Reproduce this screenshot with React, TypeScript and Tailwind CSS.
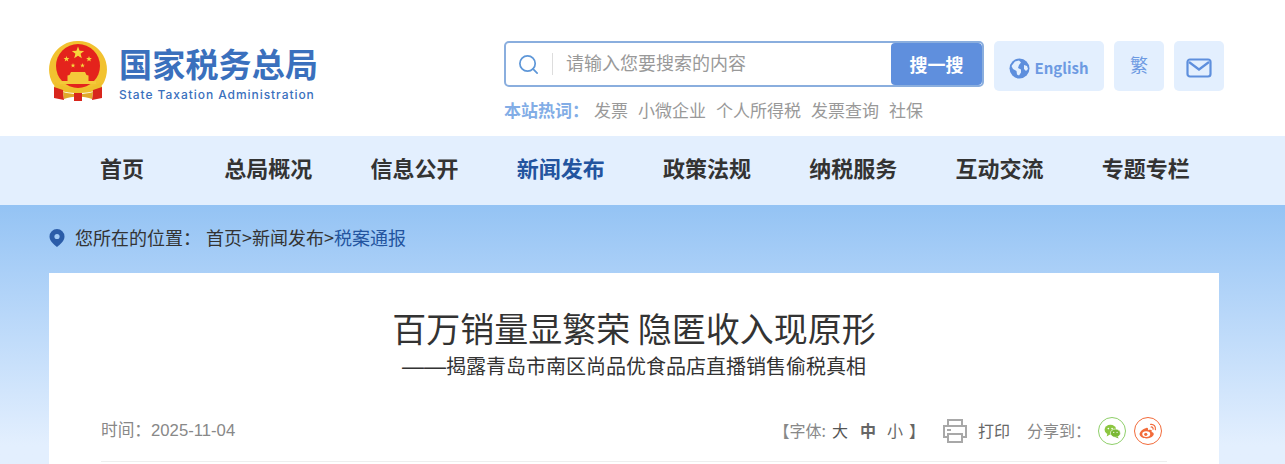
import React from "react";
import { Search } from "lucide-react";

const navItems = ["首页", "总局概况", "信息公开", "新闻发布", "政策法规", "纳税服务", "互动交流", "专题专栏"];
const hotWords = ["发票", "小微企业", "个人所得税", "发票查询", "社保"];

const stars = [
  { x: 29, y: 12, r: 6.5 },
  { x: 17.5, y: 18, r: 3 },
  { x: 40, y: 18, r: 3 },
  { x: 24, y: 24.5, r: 2.5 },
  { x: 33.5, y: 24.5, r: 2.5 },
];

const starPoints = (x: number, y: number, r: number) =>
  Array.from({ length: 10 }, (_, i) => {
    const a = (i * Math.PI) / 5 - Math.PI / 2;
    const d = i % 2 ? r * 0.42 : r;
    return `${x + d * Math.cos(a)},${y + d * Math.sin(a)}`;
  }).join(" ");

const Emblem = () => (
  <svg width="58" height="61" viewBox="0 0 58 61" className="shrink-0">
    <path d="M29 0a28.500 28.500 0 0 1 25 43l-6 6H10l-6-6A28.500 28.500 0 0 1 29 0z" fill="#f2c230" />
    <circle cx="29" cy="25" r="22" fill="#e4231c" />
    {stars.map((s) => (
      <polygon key={s.x} points={starPoints(s.x, s.y, s.r)} fill="#f7d63c" />
    ))}
    <path d="M22 31h14l1.500 3 2 .5V40H18.500v-5.500l2-.5z" fill="#f4c93a" />
    <path d="M11 40h36v3H11z" fill="#f4c93a" />
    <path d="M6 41c6 5 15 6 23 6s17-1 23-6l1 6c-7 4-16 5-24 5s-17-1-24-5z" fill="#eec02c" />
    <path d="M5 46l9 3 1 10-10-2z" fill="#d8261c" />
    <path d="M53 46l-9 3-1 10 10-2z" fill="#d8261c" />
    <path d="M14 51c5 1.500 10 2 15 2s10-.5 15-2l-1 7c-4-1.500-9-2.500-14-2.500S19 56.500 15 58z" fill="#e0a92a" />
    <path d="M25 52h8v8h-8z" fill="#d8261c" />
  </svg>
);

const GlobeIcon = () => (
  <svg width="21" height="21" viewBox="0 0 21 21">
    <circle cx="10.500" cy="10.500" r="10" fill="#5e8fdd" />
    <path d="M6 3.500l4-1 2 2-2 2.500-1 3 3 1.500v3l-2 3-2-1-.5-3.500-3.500-2-1.500-3z" fill="#e3effe" />
    <path d="M15 7l3 1 1 3-2 2-2-2z" fill="#e3effe" />
  </svg>
);

const MailIcon = () => (
  <svg width="26" height="20" viewBox="0 0 26 20" fill="none" stroke="#5e8fdd" strokeWidth="2.200">
    <rect x="1.500" y="1.500" width="23" height="17" rx="2.500" />
    <path d="M3 4l10 7.500L23 4" />
  </svg>
);

const PrintIcon = () => (
  <svg width="26" height="26" viewBox="0 0 26 26" fill="none" stroke="#a8a8a8" strokeWidth="2">
    <path d="M6 8V2h14v6" />
    <path d="M6 19H2V8h22v11h-4" />
    <rect x="6" y="16" width="14" height="8" />
    <path d="M5 12h4" />
  </svg>
);

const WechatIcon = () => (
  <svg width="17" height="15" viewBox="0 0 20 18">
    <ellipse cx="7.500" cy="7" rx="7" ry="6" fill="#8cc63f" />
    <path d="M4 11l-1 4 4-2.500z" fill="#8cc63f" />
    <ellipse cx="13.500" cy="11" rx="6" ry="5" fill="#7ab833" stroke="#fff" strokeWidth="0.800" />
    <path d="M16 15l1.500 2.500-4-1.500z" fill="#7ab833" />
    <circle cx="5" cy="5.500" r="1" fill="#fff" />
    <circle cx="9.500" cy="5.500" r="1" fill="#fff" />
    <circle cx="11.500" cy="10" r="0.800" fill="#fff" />
    <circle cx="15.500" cy="10" r="0.800" fill="#fff" />
  </svg>
);

const WeiboIcon = () => (
  <svg width="18" height="16" viewBox="0 0 20 18">
    <path d="M8 5.500C4 6.500 0.500 10 0.500 12.500 0.500 15.500 4.500 17.500 8.500 17.500c4.500 0 8-2.700 8-5 0-1.500-1.500-2-2.500-2.300.7-1.700.2-2.700-2-2.500-1 .1-2 .6-2 .6.500-2.300-.3-3.500-2-2.800z" fill="#f26b3a" />
    <ellipse cx="8" cy="12.500" rx="4.500" ry="3.200" fill="#fff" />
    <circle cx="7.500" cy="12.700" r="1.800" fill="#f26b3a" />
    <path d="M13 1.500c3.500-.5 6 2.500 5.300 6M13.500 4.500c1.500-.2 2.500 1 2.200 2.500" fill="none" stroke="#f26b3a" strokeWidth="1.400" strokeLinecap="round" />
  </svg>
);

export default function App() {
  return (
    <div className="h-[464px] overflow-hidden bg-white font-['Noto_Sans_CJK_SC','Noto_Sans',sans-serif]">
      {/* top header */}
      <header className="flex h-[136px] pl-[49px]">
        <div className="flex w-[455px] items-start pt-[41px]">
          <Emblem />
          <div className="ml-[12px] flex flex-col">
            <div className="-mt-[2px] h-[42px] text-[33px] leading-[48px] font-bold tracking-[0.2px] text-[#3a70bd]">
              国家税务总局
            </div>
            <div className="mt-[4px] font-['Inter',sans-serif] text-[12px] leading-[20px] font-medium tracking-[0.95px] text-[#3a70bd]">
              State Taxation Administration
            </div>
          </div>
        </div>
        <div className="flex w-[490px] flex-col pt-[41px]">
          <div className="flex h-[46px] w-[480px] overflow-hidden rounded-[5px] border-2 border-[#8aaede] bg-white">
            <div className="flex w-[46px] items-center justify-end pr-[12px]">
              <Search size={23} strokeWidth={1.800} className="text-[#5e97d8]" />
            </div>
            <div className="my-[10px] w-px bg-[#dddddd]" />
            <div className="flex-1 pl-[13px] text-[18px] leading-[38px] text-[#999999]">请输入您要搜索的内容</div>
            <div className="flex w-[91px] items-center justify-center rounded-[4px] bg-[#5f8fdd] text-[18px] font-bold text-white">
              搜一搜
            </div>
          </div>
          <div className="mt-[11px] flex items-center text-[17px] leading-[24px]">
            <span className="mr-[5px] font-bold text-[#82ade6]">本站热词：</span>
            <div className="flex gap-[10px] text-[#999999]">
              {hotWords.map((w) => (
                <span key={w}>{w}</span>
              ))}
            </div>
          </div>
        </div>
        <div className="flex items-start gap-[10px] pt-[41px]">
          <div className="flex h-[50px] w-[110px] items-center justify-center gap-[4px] rounded-[5px] bg-[#e3effe] pt-[4px] text-[15px] font-bold text-[#6d9ae2]">
            <GlobeIcon />
            <span>English</span>
          </div>
          <div className="flex h-[50px] w-[50px] items-center justify-center rounded-[5px] bg-[#e3effe] pb-[3px] text-[18px] text-[#6d9ae2]">
            繁
          </div>
          <div className="flex h-[50px] w-[50px] items-center justify-center rounded-[5px] bg-[#e3effe] pt-[4px]">
            <MailIcon />
          </div>
        </div>
      </header>

      {/* main nav */}
      <nav className="flex h-[69px] items-center bg-[#e3effe] pb-[6px] pl-[49px]">
        <div className="grid w-[1170px] grid-cols-8">
          {navItems.map((item) => (
            <a
              key={item}
              className={`text-center text-[22px] font-bold ${item === "新闻发布" ? "text-[#23549f]" : "text-[#333333]"}`}
            >
              {item}
            </a>
          ))}
        </div>
      </nav>

      {/* content area */}
      <main className="bg-gradient-to-b from-[#94c3f4] to-[#e3effe] to-[240px] px-[49px]">
        <div className="flex h-[68px] items-center pb-[4px] text-[18px] text-[#333333]">
          <svg width="16" height="18" viewBox="0 0 16 18" className="mt-[2px] mr-[10px]">
            <path d="M8 0a7.500 7.500 0 0 1 7.500 7.500C15.500 12 11 15.500 8 18 5 15.500.5 12 .5 7.500A7.500 7.500 0 0 1 8 0z" fill="#2b5ca8" />
            <circle cx="8" cy="7.500" r="2.600" fill="#a3cbf6" />
          </svg>
          <span>您所在的位置：</span>
          <span className="ml-[5px]">首页&gt;新闻发布&gt;</span>
          <span className="text-[#23549f]">税案通报</span>
        </div>
        <article className="h-[191px] w-[1170px] bg-white px-[52px]">
          <h1 className="pt-[30px] text-center text-[34px] leading-[50px] font-normal text-[#333333]">
            百万销量显繁荣 隐匿收入现原形
          </h1>
          <p className="-mt-[1px] text-center text-[20px] leading-[28px] text-[#333333]">
            <span className="font-['Liberation_Sans',sans-serif] text-[22px]">——</span>揭露青岛市南区尚品优食品店直播销售偷税真相
          </p>
          <div className="mt-[27px] flex h-[54px] items-start justify-between border-b border-[#eeeeee] pr-[5px]">
            <div className="pt-[10px] font-['Liberation_Sans','Noto_Sans_CJK_SC',sans-serif] text-[16.7px] leading-[26px] text-[#888888]">
              时间：2025-11-04
            </div>
            <div className="flex items-center pt-[9px]">
              <div className="flex items-center pb-[3px] text-[16px]">
                <span className="text-[#888888]">【字体:</span>
                <span className="ml-[6px] text-[#555555]">大</span>
                <span className="ml-[12px] font-bold text-[#666666]">中</span>
                <span className="ml-[11px] text-[#666666]">小</span>
                <span className="ml-[6px] text-[#666666]">】</span>
              </div>
              <span className="ml-[17px]">
                <PrintIcon />
              </span>
              <span className="ml-[10px] pb-[3px] text-[16px] text-[#666666]">打印</span>
              <span className="ml-[17px] pb-[3px] text-[16px] text-[#888888]">分享到：</span>
              <span className="ml-[7px] flex h-[28px] w-[28px] items-center justify-center rounded-full border border-[#8fcf6a]">
                <WechatIcon />
              </span>
              <span className="ml-[8px] flex h-[28px] w-[28px] items-center justify-center rounded-full border border-[#f26b3a]">
                <WeiboIcon />
              </span>
            </div>
          </div>
        </article>
      </main>
    </div>
  );
}
